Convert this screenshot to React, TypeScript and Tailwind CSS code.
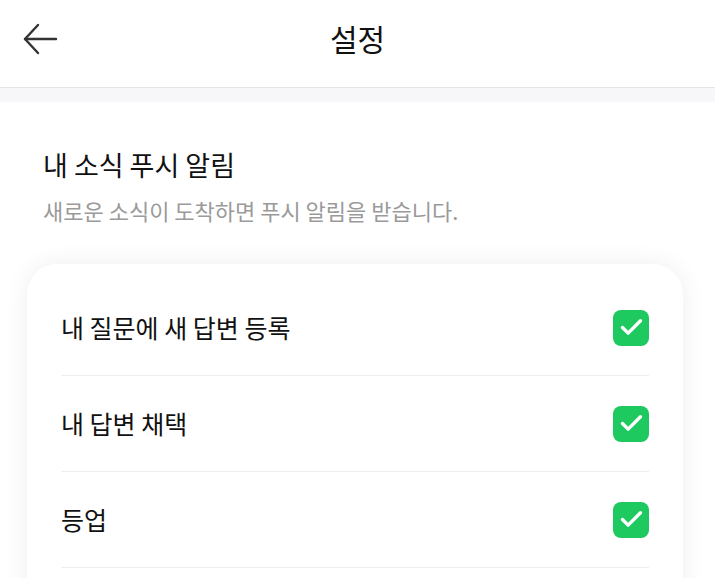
import { Check } from 'lucide-react';

const items = ['내 질문에 새 답변 등록', '내 답변 채택', '등업'];

const App = () => {
  return (
    <div
      className="min-h-screen bg-white text-[#111]"
      style={{ fontFamily: '"Noto Sans CJK KR", "Noto Sans", sans-serif' }}
    >
      {/* Header */}
      <header className="relative flex h-[88px] justify-center border-b border-[#e4e4e6] pt-[21px]">
        <button className="absolute left-[22px] top-[22px] text-[#333]">
          <svg width="36" height="34" viewBox="0 0 36 34" fill="none" stroke="currentColor" strokeWidth="2.4" strokeLinecap="round" strokeLinejoin="round">
            <path d="M34 17H3" />
            <path d="M16 3L3 17l13 14" />
          </svg>
        </button>
        <h1 className="text-[30px] font-normal leading-[34px]">설정</h1>
      </header>
      <div className="h-[14px] bg-[#f7f7f9]" />

      {/* Push section */}
      <section className="pl-[27px] pr-[32px] pt-[46px]">
        <div className="px-[16px]">
          <h2 className="text-[27px] leading-[34px]">내 소식 푸시 알림</h2>
          <p className="mt-[14px] text-[22px] leading-[28px] text-[#9a9a9a]">
            새로운 소식이 도착하면 푸시 알림을 받습니다.
          </p>
        </div>

        <div className="mt-[40px] rounded-[30px] bg-white px-[34px] pb-[60px] pt-[16px] shadow-[0_0_24px_rgba(0,0,0,0.07)]">
          {items.map((item) => (
            <div key={item} className="flex h-[96px] items-center justify-between border-b border-[#eeeeef]">
              <span className="text-[25px] leading-none">{item}</span>
              <span className="flex h-[36px] w-[36px] items-center justify-center rounded-[8px] bg-[#1ec95f]">
                <Check size={27} strokeWidth={3} className="text-white" />
              </span>
            </div>
          ))}
        </div>
      </section>
    </div>
  );
};

export default App;
